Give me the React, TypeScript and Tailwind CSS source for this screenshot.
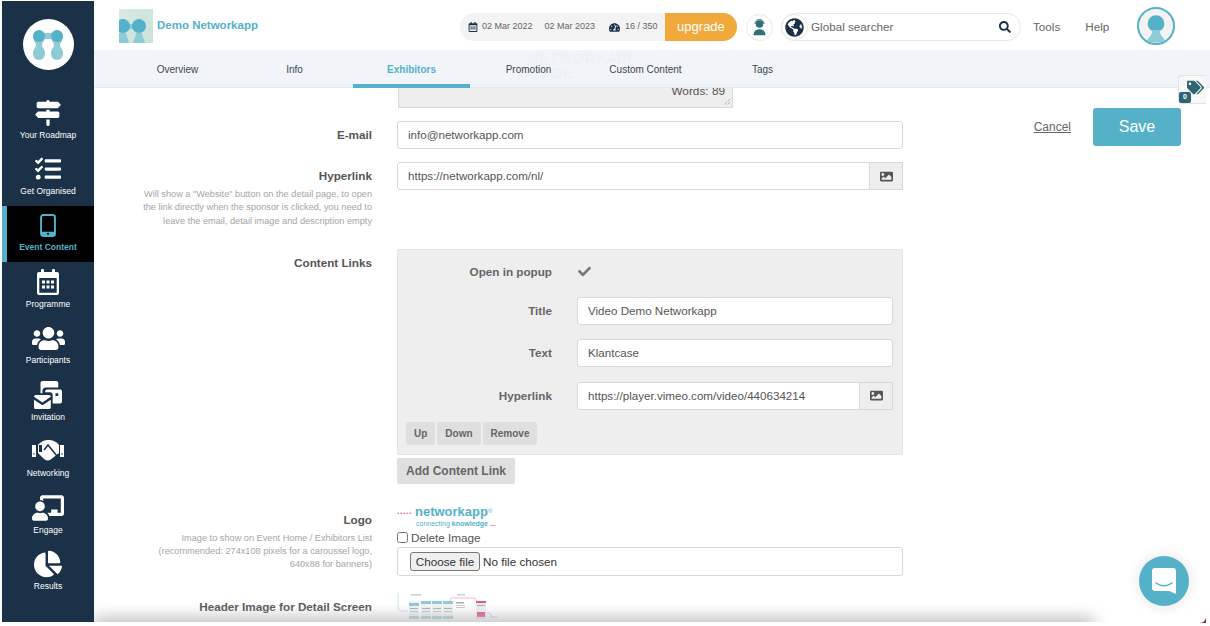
import { ReactNode } from "react";
import {
  FaChalkboardTeacher,
  FaChartPie,
  FaCheck,
  FaGlobeAmericas,
  FaImage,
  FaRegCalendarAlt,
  FaSearch,
  FaTachometerAlt,
  FaTags,
  FaTasks,
  FaUsers,
} from "react-icons/fa";
import { FaSignsPost } from "react-icons/fa6";

const font = "font-['Liberation_Sans',Arial,sans-serif]";

const Keyhole = ({ className }: { className?: string }) => (
  <svg viewBox="0 0 40 40" className={className}>
    <circle cx="20" cy="13" r="12" fill="#55b1c8" />
    <path d="M14 22c1 5-1 8-5 12-2 2-1 6 2 6h18c3 0 4-4 2-6-4-4-6-7-5-12z" fill="#8fcbd6" />
  </svg>
);

const PhoneIcon = () => (
  <svg viewBox="0 0 18 26" className="w-[16px] h-[25px]">
    <rect x="1.2" y="1.2" width="15.6" height="23.6" rx="2.5" fill="none" stroke="#55b1c8" strokeWidth="2.2" />
    <rect x="1.2" y="20" width="15.6" height="4.8" fill="#55b1c8" />
    <circle cx="9" cy="22.4" r="1.2" fill="#000" />
  </svg>
);

const CalendarIcon = () => (
  <svg viewBox="0 0 22 26" className="w-[22px] h-[26px]" fill="#fff">
    <rect x="4" y="0" width="3" height="6" rx="1" />
    <rect x="15" y="0" width="3" height="6" rx="1" />
    <path d="M2 3h18a2 2 0 0 1 2 2v19a2 2 0 0 1-2 2H2a2 2 0 0 1-2-2V5a2 2 0 0 1 2-2zM2.300 9v14.700h17.400V9z" fillRule="evenodd" />
    <rect x="5" y="11.500" width="3" height="3" />
    <rect x="9.500" y="11.500" width="3" height="3" />
    <rect x="14" y="11.500" width="3" height="3" />
    <rect x="5" y="16.500" width="3" height="3" />
    <rect x="9.500" y="16.500" width="3" height="3" />
    <rect x="14" y="16.500" width="3" height="3" />
  </svg>
);

const InviteIcon = () => (
  <svg viewBox="0 0 30 30" className="w-[30px] h-[28px]" fill="#fff">
    <path d="M7 2a2 2 0 0 1 2-2h15a2 2 0 0 1 2 2v5H13a4 4 0 0 0-4 4v2H7z" />
    <path d="M12 11a2 2 0 0 1 2-2h14a2 2 0 0 1 2 2v11a2 2 0 0 1-2 2h-8v-9a3 3 0 0 0-3-3h-5zM23 13v3h3v-3z" fillRule="evenodd" />
    <path d="M0 17a2 2 0 0 1 2-2h14a2 2 0 0 1 2 2l-9 6-9-6zM0 20l9 6 9-6v8a2 2 0 0 1-2 2H2a2 2 0 0 1-2-2z" />
  </svg>
);

const HandshakeIcon = () => (
  <svg viewBox="0 0 32 22" className="w-[32px] h-[22px]">
    <path d="M0 5h4v12H0zM28 5h4v12h-4z" fill="#fff" />
    <path d="M6 5C8 2 12 0 16 0c5 0 9 2 11 5v8l-9 7c-3 1-5 0-7-2l-5-5z" fill="#fff" />
    <path d="M7 5h3v7H7z" fill="#1b3147" />
    <path d="m12 10 4-5 9 11" fill="none" stroke="#1b3147" strokeWidth="1.500" />
    <circle cx="2" cy="14" r="0.800" fill="#1b3147" />
    <circle cx="30" cy="14" r="0.800" fill="#1b3147" />
  </svg>
);

const NavItem = ({
  icon,
  label,
  active,
}: {
  icon: ReactNode;
  label: string;
  active?: boolean;
}) => (
  <div
    className={
      active
        ? "h-[56px] bg-black border-l-[5px] border-[#55b1c8] pr-[5px] flex flex-col items-center justify-end pb-[9px]"
        : "h-[56.5px] flex flex-col items-center justify-end pb-[9px]"
    }
  >
    <div className="h-[30px] flex items-center justify-center text-white">{icon}</div>
    <span className={active ? "mt-[2px] text-[8.5px] leading-[11px] font-bold text-[#55b1c8]" : "mt-[2px] text-[8.5px] leading-[11px] text-white"}>
      {label}
    </span>
  </div>
);

const Sidebar = () => (
  <aside className="relative z-30 w-[92px] ml-[2px] mt-[1px] h-[621px] bg-[#1b3147] shrink-0">
    <div className="h-[92px] pt-[18px] flex justify-center">
      <div className="w-[51px] h-[51px] rounded-full bg-white flex items-center justify-center">
        <svg viewBox="0 0 30 30" className="w-[30px] h-[30px]">
          <path d="M0 6c0 6 3 6 3 9s-3 3-3 9h12c0-6-3-6-3-9s3-3 3-9z" fill="#8fcbd6" />
          <path d="M18 6c0 6 3 6 3 9s-3 3-3 9h12c0-6-3-6-3-9s3-3 3-9z" fill="#8fcbd6" />
          <path d="M6 3h18v6H6z" fill="#8fcbd6" />
          <circle cx="6" cy="24" r="6" fill="#8fcbd6" />
          <circle cx="24" cy="24" r="6" fill="#8fcbd6" />
          <circle cx="6" cy="6" r="6" fill="#55b1c8" />
          <circle cx="24" cy="6" r="6" fill="#55b1c8" />
        </svg>
      </div>
    </div>
    <div className="flex flex-col">
      <NavItem icon={<FaSignsPost size={26} />} label="Your Roadmap" />
      <NavItem icon={<FaTasks size={26} />} label="Get Organised" />
      <NavItem active icon={<PhoneIcon />} label="Event Content" />
      <NavItem icon={<CalendarIcon />} label="Programme" />
      <NavItem icon={<FaUsers size={33} />} label="Participants" />
      <NavItem icon={<InviteIcon />} label="Invitation" />
      <NavItem icon={<HandshakeIcon />} label="Networking" />
      <NavItem icon={<FaChalkboardTeacher size={32} />} label="Engage" />
      <NavItem icon={<FaChartPie size={28} />} label="Results" />
    </div>
  </aside>
);

const Header = () => (
  <header className="h-[50px] pt-[4px] flex items-center bg-white relative z-20">
    <div className="ml-[25px] -mt-[2px] w-[34px] h-[34px] bg-gradient-to-br from-[#d9e9e2] to-[#c8e2dc] overflow-hidden relative shrink-0">
      <svg viewBox="0 0 34 34" className="w-full h-full">
        <path d="M0 24h7c1 4 2 6 3 10H0zM17 24h6c0 4 2 6 3 10H14c1-4 3-6 3-10z" fill="#8fcbd6" />
        <rect x="8" y="15" width="8" height="5" fill="#8fcbd6" />
        <circle cx="4" cy="17" r="7" fill="#55b1c8" />
        <circle cx="20" cy="17" r="7" fill="#55b1c8" />
      </svg>
    </div>
    <span className="ml-[4px] -mt-[2px] text-[11.500px] font-bold text-[#55b1c8] whitespace-nowrap">Demo Networkapp</span>
    <div className="ml-[202px] h-[28px] w-[277px] flex items-center rounded-full bg-[#f3f3f3] shrink-0">
      <FaRegCalendarAlt size={10} className="ml-[8px] text-[#1b3147]" />
      <span className="ml-[4px] text-[9px] text-[#666] whitespace-nowrap">02 Mar 2022</span>
      <span className="ml-[12px] text-[9px] text-[#666] whitespace-nowrap">02 Mar 2023</span>
      <FaTachometerAlt size={11} className="ml-[14px] text-[#1b3147]" />
      <span className="ml-[5px] text-[9px] text-[#666] whitespace-nowrap">16 / 350</span>
      <div className="ml-auto h-[28px] w-[72px] rounded-r-full bg-[#f2a93b] text-white text-[13px] flex items-center justify-center">
        upgrade
      </div>
    </div>
    <div className="ml-[9px] w-[27px] h-[27px] rounded-full bg-white border border-[#e8e8e8] flex items-center justify-center shrink-0">
      <svg viewBox="0 0 20 22" className="w-[15px] h-[18px]">
        <circle cx="10" cy="7" r="5" fill="#2f6f78" />
        <path d="M4 7a6 6 0 0 1 12 0" fill="none" stroke="#1b3147" strokeWidth="1" />
        <path d="M2 22c0-5 3-8 8-8s8 3 8 8z" fill="#2f6f78" />
      </svg>
    </div>
    <div className="ml-[8px] w-[240px] h-[28px] rounded-full bg-white border border-[#e8e8e8] flex items-center shrink-0">
      <div className="w-[27px] h-[27px] -ml-px rounded-full border border-[#e8e8e8] flex items-center justify-center">
        <FaGlobeAmericas size={19} className="text-[#1b3147]" />
      </div>
      <span className="ml-[3px] text-[11.700px] text-[#666]">Global searcher</span>
      <FaSearch size={12} className="ml-auto mr-[9px] text-[#1b3147]" />
    </div>
    <span className="ml-[12px] text-[11.700px] text-[#666]">Tools</span>
    <span className="ml-[25px] text-[11.700px] text-[#666]">Help</span>
    <div className="ml-[28px] -mt-[2px] w-[38px] h-[38px] rounded-full bg-[#f3f3f3] border-2 border-[#55b1c8] flex items-end justify-center overflow-hidden shrink-0">
      <Keyhole className="w-[28px] h-[29px]" />
    </div>
  </header>
);

const tabs = ["Overview", "Info", "Exhibitors", "Promotion", "Custom Content", "Tags"];

const TabBar = () => (
  <nav className="relative z-10 h-[38px] bg-[#f0f4f9]/95 border-b border-[#e6eaef] flex pl-[25px]">
    {tabs.map((t) => (
      <div
        key={t}
        className={
          t === "Exhibitors"
            ? "h-[38px] w-[117px] shrink-0 border-b-[4px] border-[#55b1c8] text-[10px] font-bold text-[#55b1c8] flex items-center justify-center pt-[4px]"
            : "h-[38px] w-[117px] shrink-0 text-[10px] text-[#3d4650] flex items-center justify-center"
        }
      >
        {t}
      </div>
    ))}
  </nav>
);

const Field = ({
  label,
  help,
  children,
  className,
  labelTop,
}: {
  label: string;
  help?: string[];
  children: ReactNode;
  className?: string;
  labelTop: string;
}) => (
  <div className={"flex " + (className ?? "")}>
    <div className={"w-[278px] shrink-0 text-right " + labelTop}>
      <div className="text-[11.700px] leading-[16px] font-bold text-[#555]">{label}</div>
      {help && (
        <div className="mt-[4px] text-[9.200px] leading-[13.300px] text-[#a5a5a5]">
          {help.map((h) => (
            <div key={h} className="whitespace-nowrap">{h}</div>
          ))}
        </div>
      )}
    </div>
    <div className="ml-[25px] w-[506px] shrink-0">{children}</div>
  </div>
);

const TextBox = ({ value, className }: { value: string; className?: string }) => (
  <div className={"h-[28px] bg-white border border-[#d8d8d8] rounded-[3px] px-[10px] flex items-center text-[11.600px] text-[#555] " + (className ?? "")}>
    {value}
  </div>
);

const ImageBox = ({ value }: { value: string }) => (
  <div className="flex h-[28px]">
    <div className="flex-1 bg-white border border-[#d8d8d8] rounded-l-[3px] px-[10px] flex items-center text-[11.600px] text-[#555]">
      {value}
    </div>
    <div className="w-[33px] bg-[#eeeeee] border border-l-0 border-[#d8d8d8] flex items-center justify-center text-[#555]">
      <FaImage size={13} />
    </div>
  </div>
);

const SubRow = ({ label, children }: { label: string; children: ReactNode }) => (
  <div className="flex items-center">
    <div className="w-[154px] text-right text-[11.700px] font-bold text-[#666] shrink-0">{label}</div>
    <div className="ml-[25px] w-[316px]">{children}</div>
  </div>
);

const GreyButton = ({ label }: { label: string }) => (
  <div className="h-[23px] px-[8px] bg-[#dfdfdf] rounded-[2px] text-[10px] font-bold text-[#666] flex items-center">
    {label}
  </div>
);

const HeaderThumb = () => (
  <svg viewBox="0 0 100 27" className="w-[100px] h-[27px]">
    <path d="M1 0v14q0 4 4 4h6" fill="none" stroke="#bfe0e8" strokeWidth="0.800" />
    <path d="M53 13V7q0-2 2-2h22q2 0 2 2v1" fill="none" stroke="#f3a6c8" strokeWidth="0.800" />
    <path d="M90 20h2q2 0 2 2v2h6" fill="none" stroke="#f3a6c8" strokeWidth="0.800" />
    <rect x="14" y="1" width="10" height="1.500" fill="#ccc" />
    <rect x="60" y="1" width="8" height="1.500" fill="#ccc" />
    {[12, 24, 35, 46].map((x, i) => (
      <g key={x}>
        <rect x={x} y="8" width="10" height="18" fill="#f2f4f5" />
        <rect x={x} y={i === 0 ? 10 : 8} width="10" height="3" fill="#8fcbd6" />
        <rect x={x + 1} y="15" width="8" height="1" fill="#aab4b8" />
        <rect x={x + 1} y="18" width="8" height="1" fill="#c4cbce" />
        <rect x={x} y="23" width="10" height="3" fill="#a8d6e0" />
      </g>
    ))}
    <rect x="59" y="9" width="8" height="1.500" fill="#aaa" />
    <rect x="59" y="12" width="9" height="1" fill="#ccc" />
    <rect x="59" y="14" width="9" height="1" fill="#ccc" />
    <rect x="79" y="8" width="10" height="18" fill="#f0f0f0" />
    <rect x="79" y="8" width="10" height="2" fill="#e6569b" />
    <rect x="80" y="19" width="8" height="5" fill="#e6569b" />
    <rect x="80" y="12" width="8" height="1" fill="#aaa" />
  </svg>
);

const Form = () => (
  <div className="relative flex-1">
    <div className="ml-[304px] -mt-[38px] w-[335px] h-[58px] bg-[#eeeeee] border border-[#d8d8d8] relative">
      <div className="pl-[129px] text-[14px] leading-[15px] text-[#5b6b7a] tracking-[1px] opacity-60 whitespace-nowrap">
        <div>NETWORKAPP</div>
        <div className="-ml-[12px]">VAN DE</div>
      </div>
      <span className="absolute right-[7px] bottom-[9px] text-[11.800px] leading-[13px] text-[#555]">Words: 89</span>
      <svg viewBox="0 0 8 8" className="absolute right-[1px] bottom-[1px] w-[8px] h-[8px]">
        <path d="M7 1 1 7M7 4 4 7" stroke="#999" strokeWidth="1" strokeDasharray="1 1" />
      </svg>
    </div>

    <div className="pt-[13px] flex flex-col">
      <Field label="E-mail" labelTop="pt-[6px]">
        <TextBox value="info@networkapp.com" />
      </Field>

      <Field
        label="Hyperlink"
        labelTop="pt-[6px]"
        className="mt-[13px]"
        help={[
          'Will show a "Website" button on the detail page, to open',
          "the link directly when the sponsor is clicked, you need to",
          "leave the email, detail image and description empty",
        ]}
      >
        <ImageBox value="https://networkapp.com/nl/" />
      </Field>

      <Field label="Content Links" labelTop="pt-[6px]" className="mt-[21px]">
        <div className="h-[206px] bg-[#eeeeee] border border-[#e2e2e2] rounded-[2px] pt-[9px]">
          <div className="flex flex-col">
            <SubRow label="Open in popup">
              <div className="h-[26px] flex items-center text-[#777]">
                <FaCheck size={13} className="ml-[1px]" />
              </div>
            </SubRow>
            <div className="mt-[12px]">
              <SubRow label="Title"><TextBox value="Video Demo Networkapp" /></SubRow>
            </div>
            <div className="mt-[14px]">
              <SubRow label="Text"><TextBox value="Klantcase" /></SubRow>
            </div>
            <div className="mt-[15px]">
              <SubRow label="Hyperlink"><ImageBox value="https://player.vimeo.com/video/440634214" /></SubRow>
            </div>
          </div>
          <div className="mt-[12px] ml-[8px] flex gap-[2px]">
            <GreyButton label="Up" />
            <GreyButton label="Down" />
            <GreyButton label="Remove" />
          </div>
        </div>
        <div className="mt-[3px] w-[118px] h-[26px] bg-[#dfdfdf] rounded-[2px] text-[12px] font-bold text-[#666] flex items-center justify-center">
          Add Content Link
        </div>
      </Field>

      <Field
        label="Logo"
        labelTop="pt-[10px]"
        className="mt-[18px]"
        help={[
          "Image to show on Event Home / Exhibitors List",
          "(recommended: 274x108 pixels for a caroussel logo,",
          "640x88 for banners)",
        ]}
      >
        <div className="h-[27px] pt-[2px] flex flex-col">
          <div className="flex items-center h-[15px] leading-[15px]">
            <span className="w-[18px] text-[#e6569b] text-[9px] font-bold tracking-[0.500px]">.....</span>
            <span className="text-[13px] font-bold text-[#55b1c8]">networkapp</span>
            <span className="text-[6px] text-[#55b1c8] self-start">®</span>
          </div>
          <div className="ml-[19px] text-[7px] leading-[9px] text-[#55b1c8] whitespace-nowrap">
            connecting <b>knowledge</b><span className="text-[#e6569b] font-bold"> ...</span>
          </div>
        </div>
        <label className="mt-[1px] h-[16px] flex items-center gap-[3px] text-[11.700px] text-[#555]">
          <input type="checkbox" className="w-[11px] h-[11px] m-0" />
          Delete Image
        </label>
        <div className="mt-[1px] h-[29px] bg-white border border-[#d8d8d8] rounded-[3px] pl-[12px] flex items-center text-[11.700px] text-[#333]">
          <div className="h-[19px] w-[70px] bg-[#efefef] border border-[#777] rounded-[3px] flex items-center justify-center">Choose file</div>
          <span className="ml-[3px]">No file chosen</span>
        </div>
      </Field>

      <Field label="Header Image for Detail Screen" labelTop="pt-[6px]" className="mt-[17px]">
        <HeaderThumb />
      </Field>
    </div>
  </div>
);

const Overlays = () => (
  <>
    <div className="absolute right-[29px] top-[108px] flex items-center z-20">
      <span className="text-[12px] text-[#666] underline">Cancel</span>
      <div className="ml-[22px] w-[88px] h-[38px] rounded-[3px] bg-[#55b1c8] text-white text-[16px] flex items-center justify-center">
        Save
      </div>
    </div>
    <div className="absolute right-[4px] top-[75px] w-[28px] h-[29px] bg-[#f7f7f7] border border-r-0 border-[#e2e2e2] rounded-l-[4px] z-20">
      <FaTags size={17} className="absolute left-[8px] top-[3px] text-[#2f6473]" />
      <span className="absolute left-[0px] bottom-[0px] w-[12px] h-[11px] rounded-[2px] bg-[#2f6473] text-white text-[7px] font-bold flex items-center justify-center">0</span>
    </div>
    <div className="absolute right-[21px] top-[556px] w-[50px] h-[50px] rounded-full bg-[#55b1c8] shadow-[0_0_14px_rgba(0,0,0,0.12)] flex items-center justify-center z-30">
      <svg viewBox="0 0 24 26" className="w-[24px] h-[26px]">
        <path d="M3 0h18a3 3 0 0 1 3 3v23l-7-3H3a3 3 0 0 1-3-3V3a3 3 0 0 1 3-3z" fill="#fff" />
        <path d="M4 15c5 3.500 11 3.500 16 0" fill="none" stroke="#55b1c8" strokeWidth="1.500" strokeLinecap="round" />
      </svg>
    </div>
    <div className="absolute left-[94px] w-[1000px] top-[618px] h-[14px] bg-[#b5b5b5] blur-[8px] z-10" />
    <div className="absolute left-0 right-0 top-[622px] h-[4px] bg-white z-10" />
    <div className="absolute left-[1199px] top-[616px] w-[7px] h-[7px] bg-[#6b2f4a] z-20">
      <div className="w-full h-full bg-white rounded-br-[6px]" />
    </div>
  </>
);

export default function App() {
  return (
    <div className={"relative w-[1210px] h-[626px] overflow-hidden bg-white flex " + font}>
      <Sidebar />
      <main className="flex-1 min-w-0 flex flex-col h-[626px]">
        <Header />
        <TabBar />
        <Form />
      </main>
      <Overlays />
    </div>
  );
}
